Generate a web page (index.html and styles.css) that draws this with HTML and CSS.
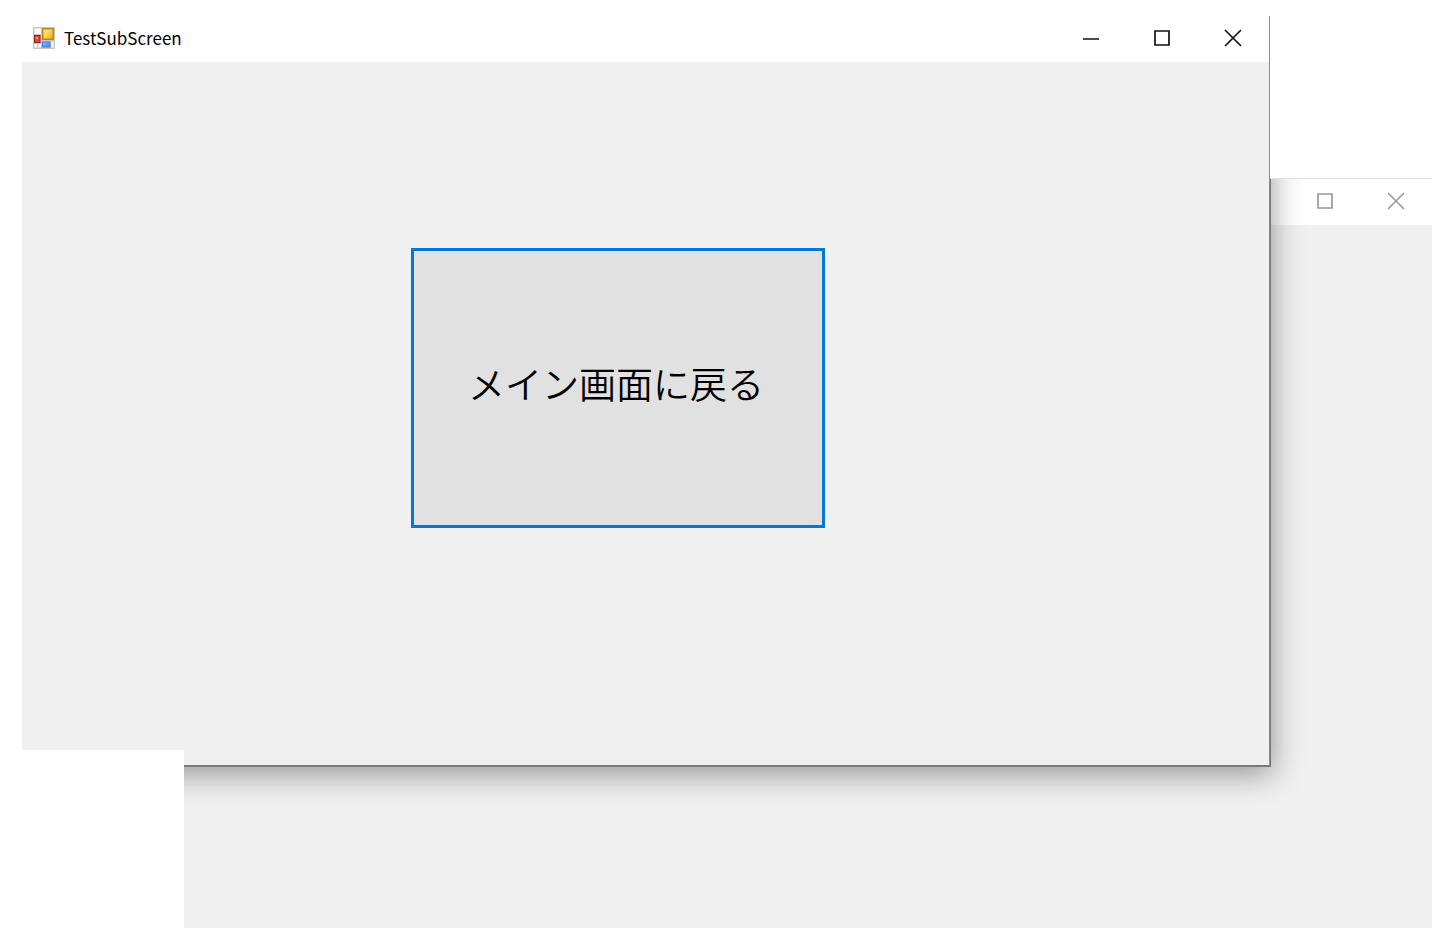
FILE: index.html
```html
<!DOCTYPE html>
<html lang="ja">
<head>
<meta charset="utf-8">
<title>TestSubScreen</title>
<link rel="stylesheet" href="styles.css">
</head>
<body>
<main class="desktop">
  <section class="window window-back" aria-label="Main">
    <header class="titlebar">
      <div class="controls">
        <button class="control" type="button" aria-label="Maximize"><svg width="18" height="18" viewBox="0 0 18 18"><path d="M2 2H16V16H2Z"/></svg></button>
        <button class="control" type="button" aria-label="Close"><svg width="18" height="18" viewBox="0 0 18 18"><path d="M1 1L17 17M17 1L1 17"/></svg></button>
      </div>
    </header>
    <div class="client"></div>
    <div class="cast-shadow"></div>
  </section>
  <section class="window window-front" aria-labelledby="title">
    <header class="titlebar">
      <svg class="app-icon" width="22" height="22" viewBox="0 0 22 22" aria-hidden="true">
        <defs>
          <linearGradient id="gold" x2="1" y2="1"><stop offset="0" stop-color="#fff0a0"/><stop offset="1" stop-color="#f0b400"/></linearGradient>
          <linearGradient id="blue" x2="1" y2="1"><stop offset="0" stop-color="#8ab8ff"/><stop offset="1" stop-color="#4a86e8"/></linearGradient>
        </defs>
        <path fill="#c6c6c8" d="M0 0H22V22H0Z"/>
        <path fill="#fff" d="M1.500 1.500H8V7H1.500ZM1.500 17H4V20.500H1.500ZM5.500 17H8V20.500H5.500ZM18.500 14.500H20.500V20.500H18.500Z"/>
        <path fill="#a81c12" d="M1 8H7.500V16H1Z"/>
        <path fill="#d94838" d="M2 9H6.500V15H2Z"/>
        <path fill="#f4a090" d="M3 10H5V12H3Z"/>
        <path fill="#bd8a08" d="M9 1H21V13H9Z"/>
        <path fill="url(#gold)" d="M10.500 2.500H19.500V11.500H10.500Z"/>
        <path fill="#4b7fd8" d="M9 14.500H17.500V20.500H9Z"/>
        <path fill="url(#blue)" d="M10 15.500H16.500V19.500H10Z"/>
      </svg>
      <h1 class="title" id="title">TestSubScreen</h1>
      <div class="controls">
        <button class="control" type="button" aria-label="Minimize"><svg width="18" height="18" viewBox="0 0 18 18"><path d="M1 10H17"/></svg></button>
        <button class="control" type="button" aria-label="Maximize"><svg width="18" height="18" viewBox="0 0 18 18"><path d="M2 2H16V16H2Z"/></svg></button>
        <button class="control" type="button" aria-label="Close"><svg width="18" height="18" viewBox="0 0 18 18"><path d="M1 1L17 17M17 1L1 17"/></svg></button>
      </div>
    </header>
    <div class="client">
      <button class="return-button" type="button">メイン画面に戻る</button>
    </div>
  </section>
</main>
</body>
</html>
```
FILE: styles.css
```css
* { box-sizing: border-box; }

body {
  margin: 0;
  background: #fff;
  color: #000;
  font-family: "Noto Sans", "Noto Sans CJK JP", sans-serif;
}

.desktop {
  position: relative;
  height: 100vh;
  min-height: 800px;
  overflow: hidden;
}

.window {
  position: absolute;
  display: flex;
  flex-direction: column;
  overflow: hidden;
  background: #fff;
}

.window-front {
  top: 16px;
  left: 22px;
  right: 184px;
  height: 751px;
  border-right: 1px solid #8c8c8c;
  border-bottom: 2px solid #7a7a7a;
  clip-path: polygon(0 0, 100% 0, 100% 100%, 162px 100%, 162px 734px, 0 734px);
}

.window-back {
  top: 178px;
  left: 184px;
  right: 22px;
  bottom: 0;
  border-top: 1px solid #e2e2e2;
}

/* The front window's shadow falls only on the window behind it. */
.cast-shadow {
  position: absolute;
  top: -163px;
  left: -180px;
  right: 162px;
  height: 751px;
  box-shadow: 1px 0 0 #777, 3px 8px 28px rgba(0, 0, 0, 0.36);
}

.titlebar {
  display: flex;
  align-items: center;
  flex: none;
  height: 46px;
  padding: 0 1px 3px 11px;
}

.app-icon { flex: none; }

.title {
  margin: 0 0 0 9px;
  font-family: "Noto Sans CJK JP", sans-serif;
  font-size: 17px;
  font-weight: 400;
  line-height: 24px;
}

.controls {
  display: flex;
  align-self: stretch;
  margin-left: auto;
}

.control {
  display: grid;
  place-items: center;
  width: 71px;
  padding: 0;
  border: 0;
  background: none;
}

.control svg {
  fill: none;
  stroke: #111;
  stroke-width: 1.7;
}

.window-back .control svg { stroke: #999; }

.client {
  flex: 1;
  padding: 186px 0 0 389px;
  background: #f0f0f0;
}

.return-button {
  width: 414px;
  height: 280px;
  padding: 0 4px 10px 0;
  border: 3px solid #0078d7;
  background: #e1e1e1;
  color: #000;
  font-family: "Noto Sans CJK JP", sans-serif;
  font-size: 37px;
  font-weight: 350;
  line-height: 48px;
}
```
